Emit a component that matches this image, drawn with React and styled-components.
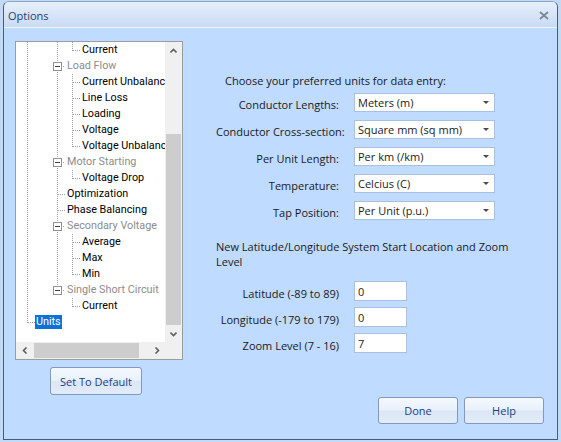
import React from 'react';
import styled, { createGlobalStyle } from 'styled-components';

const GlobalStyle = createGlobalStyle`
  html, body { margin: 0; padding: 0; }
  body {
    background: #bfdbff;
    font-family: "Open Sans", "Liberation Sans", sans-serif;
    font-size: 11px;
    color: #1a1a1a;
  }
`;

// tree guide columns (local to the tree's client area)
const A = 11;
const B = 41;
const C = 56;

const leaf3 = { w: 65, h: [C, 63] };
const leaf2 = { w: 50, h: [B, 48] };
const group = { w: 50, box: true, h: [46, 48] };

const treeRows = [
  { label: 'Current', ...leaf3, full: [A, B], half: C },
  { label: 'Load Flow', ...group, full: [A, B], muted: true },
  { label: 'Current Unbalanc', ...leaf3, full: [A, B, C] },
  { label: 'Line Loss', ...leaf3, full: [A, B, C] },
  { label: 'Loading', ...leaf3, full: [A, B, C] },
  { label: 'Voltage', ...leaf3, full: [A, B, C] },
  { label: 'Voltage Unbalanc', ...leaf3, full: [A, B], half: C },
  { label: 'Motor Starting', ...group, full: [A, B], muted: true },
  { label: 'Voltage Drop', ...leaf3, full: [A, B], half: C },
  { label: 'Optimization', ...leaf2, full: [A, B] },
  { label: 'Phase Balancing', ...leaf2, full: [A, B] },
  { label: 'Secondary Voltage', ...group, full: [A, B], muted: true },
  { label: 'Average', ...leaf3, full: [A, B, C] },
  { label: 'Max', ...leaf3, full: [A, B, C] },
  { label: 'Min', ...leaf3, full: [A, B], half: C },
  { label: 'Single Short Circuit', ...group, full: [A], half: B, muted: true },
  { label: 'Current', ...leaf3, full: [A], half: C },
  { label: 'Units', w: 19, half: A, h: [A, 18], selected: true },
];

const unitRows = [
  ['Conductor Lengths:', 'Meters (m)'],
  ['Conductor Cross-section:', 'Square mm (sq mm)'],
  ['Per Unit Length:', 'Per km (/km)'],
  ['Temperature:', 'Celcius (C)'],
  ['Tap Position:', 'Per Unit (p.u.)'],
];

const locationRows = [
  ['Latitude (-89 to 89)', '0'],
  ['Longitude (-179 to 179)', '0'],
  ['Zoom Level (7 - 16)', '7'],
];

const Guides = ({ row }) => (
  <GuideSvg width={row.w} height={16} shapeRendering="crispEdges">
    <g stroke="#a0a0a0" strokeDasharray="1 1" fill="none">
      {(row.full || []).map((x) => (
        <line key={x} x1={x + 0.5} y1={0} x2={x + 0.5} y2={16} />
      ))}
      {row.half != null && (
        <line x1={row.half + 0.5} y1={0} x2={row.half + 0.5} y2={9} />
      )}
      {row.h && <line x1={row.h[0] + 0.5} y1={8.5} x2={row.h[1] + 1} y2={8.5} />}
    </g>
    {row.box && (
      <g>
        <rect x={37.5} y={4.5} width={8} height={8} fill="#fff" stroke="#929292" />
        <line x1={39} y1={8.5} x2={44} y2={8.5} stroke="#3c3c3c" />
      </g>
    )}
  </GuideSvg>
);

const Chevron = ({ dir }) => {
  const pts = {
    up: '0.5,4.5 3.5,1.5 6.5,4.5',
    down: '0.5,1.5 3.5,4.5 6.5,1.5',
    left: '4.5,0.5 1.5,3.5 4.5,6.5',
    right: '1.5,0.5 4.5,3.5 1.5,6.5',
  }[dir];
  const vertical = dir === 'up' || dir === 'down';
  return (
    <svg width={vertical ? 7 : 6} height={vertical ? 6 : 7}>
      <polyline points={pts} fill="none" stroke="#606060" strokeWidth="1.6" />
    </svg>
  );
};

const App = () => {
  return (
    <Screen>
      <GlobalStyle />
      <Window>
        <TitleBar>
          <Title>Options</Title>
          <CloseBtn>
            <svg width="10" height="9" viewBox="0 0 10 9">
              <path d="M1 1 L9 8 M9 1 L1 8" stroke="#7d8897" strokeWidth="1.8" fill="none" />
            </svg>
          </CloseBtn>
        </TitleBar>
        <Body>
          <Main>
            <LeftCol>
              <TreeBox>
                <TreeView>
                  {treeRows.map((row, i) => (
                    <TreeRow key={i}>
                      <Guides row={row} />
                      <NodeText $muted={row.muted} $selected={row.selected}>
                        {row.label}
                      </NodeText>
                    </TreeRow>
                  ))}
                </TreeView>
                <VScroll>
                  <ScrollArrow>
                    <Chevron dir="up" />
                  </ScrollArrow>
                  <VTrack>
                    <VThumb />
                  </VTrack>
                  <ScrollArrow>
                    <Chevron dir="down" />
                  </ScrollArrow>
                </VScroll>
                <HScroll>
                  <ScrollArrow>
                    <Chevron dir="left" />
                  </ScrollArrow>
                  <HTrack>
                    <HThumb />
                  </HTrack>
                  <ScrollArrow>
                    <Chevron dir="right" />
                  </ScrollArrow>
                </HScroll>
                <Corner />
              </TreeBox>
              <DefaultButton>Set To Default</DefaultButton>
            </LeftCol>

            <RightCol>
              <Intro>Choose your preferred units for data entry:</Intro>
              <FormGrid $control={141} $gap={8} $top={5}>
                {unitRows.map(([label, value]) => (
                  <React.Fragment key={label}>
                    <FieldLabel>{label}</FieldLabel>
                    <Combo>
                      <ComboText>{value}</ComboText>
                      <ComboButton>
                        <Arrow />
                      </ComboButton>
                    </Combo>
                  </React.Fragment>
                ))}
              </FormGrid>

              <SectionText>
                New Latitude/Longitude System Start Location and Zoom Level
              </SectionText>
              <FormGrid $control={53} $gap={6} $top={12}>
                {locationRows.map(([label, value]) => (
                  <React.Fragment key={label}>
                    <FieldLabel>{label}</FieldLabel>
                    <TextBox>{value}</TextBox>
                  </React.Fragment>
                ))}
              </FormGrid>
            </RightCol>
          </Main>

          <Footer>
            <DialogButton>Done</DialogButton>
            <DialogButton>Help</DialogButton>
          </Footer>
        </Body>
      </Window>
    </Screen>
  );
};

const Screen = styled.div`
  width: 561px;
  height: 442px;
  box-sizing: border-box;
  padding: 1px 3px 2px 3px;
  background: #c4d9f3;
`;

const Window = styled.div`
  height: 100%;
  box-sizing: border-box;
  display: flex;
  flex-direction: column;
  border: 1px solid #3e5e8b;
  border-top-color: #8aa6cc;
  border-radius: 6px 6px 0 0;
  background: #bfdbff;
  overflow: hidden;
`;

const TitleBar = styled.div`
  height: 24px;
  flex: none;
  display: flex;
  align-items: center;
  justify-content: space-between;
  padding: 1px 8px 0 4px;
  border-bottom: 1px solid #eef5fe;
  background: linear-gradient(#e6effb 0%, #d9e6f8 45%, #c9dbf4 100%);
`;

const Title = styled.span`
  color: #1e3e6e;
  font-size: 11px;
`;

const CloseBtn = styled.span`
  display: flex;
  align-items: center;
`;

const Body = styled.div`
  flex: 1;
  display: flex;
  flex-direction: column;
`;

const Main = styled.div`
  display: flex;
  padding: 13px 0 0 11px;
`;

const LeftCol = styled.div`
  display: flex;
  flex-direction: column;
  width: 168px;
`;

const TreeBox = styled.div`
  width: 168px;
  height: 319px;
  box-sizing: border-box;
  border: 1px solid #9c9c9c;
  display: grid;
  grid-template-columns: 1fr 17px;
  grid-template-rows: 1fr 17px;
  background: #fff;
`;

const TreeView = styled.div`
  overflow: hidden;
  background: #fff;
`;

const TreeRow = styled.div`
  height: 16px;
  display: flex;
  align-items: center;
  white-space: nowrap;
`;

const GuideSvg = styled.svg`
  flex: none;
  display: block;
`;

const NodeText = styled.span`
  font-family: Roboto, "Liberation Sans", sans-serif;
  font-size: 10.8px;
  line-height: 14px;
  padding: 0 1px;
  color: ${(p) => (p.$selected ? '#fff' : p.$muted ? '#8c8c8c' : '#000')};
  background: ${(p) => (p.$selected ? '#0a72d8' : 'transparent')};
`;

const VScroll = styled.div`
  display: flex;
  flex-direction: column;
  background: #f0f0f0;
`;

const HScroll = styled.div`
  display: flex;
  background: #f0f0f0;
`;

const ScrollArrow = styled.div`
  width: 17px;
  height: 17px;
  flex: none;
  display: flex;
  align-items: center;
  justify-content: center;
`;

const VTrack = styled.div`
  flex: 1;
  display: flex;
  flex-direction: column;
  justify-content: flex-end;
  padding: 0 1px;
`;

const VThumb = styled.div`
  height: 191px;
  background: #cdcdcd;
`;

const HTrack = styled.div`
  flex: 1;
  display: flex;
  padding: 1px 0 1px 1px;
`;

const HThumb = styled.div`
  width: 105px;
  background: #cdcdcd;
`;

const Corner = styled.div`
  background: #f0f0f0;
`;

const buttonLook = `
  box-sizing: border-box;
  border: 1px solid #8299bd;
  border-radius: 3px;
  background: linear-gradient(#f4f8fe 0%, #e9f1fb 48%, #dbe7f6 52%, #e2ecf9 100%);
  color: #1c3d7e;
  font-family: "Open Sans", "Liberation Sans", sans-serif;
  font-size: 11px;
  display: flex;
  align-items: center;
  justify-content: center;
  padding: 0;
`;

const DefaultButton = styled.button`
  ${buttonLook}
  width: 92px;
  height: 28px;
  margin: 7px 0 0 35px;
`;

const RightCol = styled.div`
  margin-left: 33px;
  display: flex;
  flex-direction: column;
`;

const Intro = styled.div`
  margin-top: 32px;
  padding-left: 9px;
  line-height: 15px;
`;

const FormGrid = styled.div`
  display: grid;
  grid-template-columns: 123px ${(p) => p.$control}px;
  column-gap: 15px;
  row-gap: ${(p) => p.$gap}px;
  margin-top: ${(p) => p.$top}px;
`;

const FieldLabel = styled.div`
  align-self: end;
  margin-bottom: 0;
  text-align: right;
  white-space: nowrap;
  line-height: 15px;
`;

const Combo = styled.div`
  height: 19px;
  box-sizing: border-box;
  border: 1px solid #a9c0df;
  background: #fff;
  display: flex;
  align-items: center;
`;

const ComboText = styled.span`
  flex: 1;
  padding-left: 3px;
  color: #1b1b1b;
  white-space: nowrap;
`;

const ComboButton = styled.span`
  width: 17px;
  align-self: stretch;
  display: flex;
  align-items: center;
  justify-content: center;
`;

const Arrow = styled.span`
  width: 0;
  height: 0;
  border-left: 3px solid transparent;
  border-right: 3px solid transparent;
  border-top: 3px solid #4a4a4a;
`;

const SectionText = styled.div`
  margin-top: 19px;
  width: 300px;
  line-height: 15px;
`;

const TextBox = styled.div`
  height: 20px;
  box-sizing: border-box;
  border: 1px solid #a9c0df;
  background: #fff;
  padding: 0 3px;
  display: flex;
  align-items: center;
  color: #1b1b1b;
`;

const Footer = styled.div`
  margin-top: auto;
  display: flex;
  justify-content: flex-end;
  gap: 6px;
  padding: 0 13px 15px 0;
`;

const DialogButton = styled.button`
  ${buttonLook}
  width: 80px;
  height: 27px;
`;

export default App;
